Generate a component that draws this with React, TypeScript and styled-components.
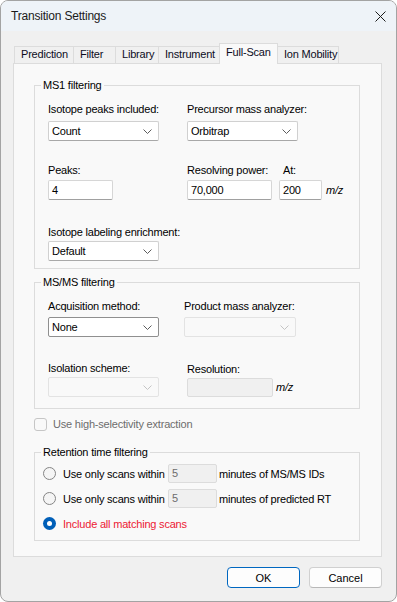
import React from 'react'
import styled, { createGlobalStyle, css } from 'styled-components'

const GlobalStyle = createGlobalStyle`
  html, body {
    margin: 0;
    padding: 0;
    background: #ffffff;
  }

  body {
    font-family: "Segoe UI", "Liberation Sans", Arial, sans-serif;
    font-size: 11px;
    letter-spacing: -0.2px;
    color: #000000;
  }

  * {
    box-sizing: border-box;
  }
`

const tabs = [
  { label: 'Prediction', width: 60 },
  { label: 'Filter', width: 43 },
  { label: 'Library', width: 44 },
  { label: 'Instrument', width: 62 },
  { label: 'Full-Scan', width: 59, active: true },
  { label: 'Ion Mobility', width: 62 },
]

function Chevron ({ disabled }: { disabled?: boolean }) {
  return (
    <svg width='9' height='5' viewBox='0 0 9 5'>
      <path d='M0.5 0.5 L4.5 4.5 L8.5 0.5' fill='none' stroke={disabled ? '#c4c4c4' : '#5c5c5c'} strokeWidth='1' />
    </svg>
  )
}

function ComboBox ({ value, width, disabled, strong }: { value?: string, width: number, disabled?: boolean, strong?: boolean }) {
  return (
    <Combo $w={width} $disabled={disabled} $strong={strong}>
      <span>{ value }</span>
      <Chevron disabled={disabled} />
    </Combo>
  )
}

export default function App () {
  return (
    <>
      <GlobalStyle />
      <Window>
        <TitleBar>
          <Title>Transition Settings</Title>
          <svg width='11' height='11' viewBox='0 0 11 11'>
            <path d='M0.5 0.5 L10.5 10.5 M10.5 0.5 L0.5 10.5' stroke='#1b1b1b' strokeWidth='1' />
          </svg>
        </TitleBar>
        <Body>
          <TabStrip>
            { tabs.map(tab => (
              <Tab key={tab.label} $w={tab.width} $active={tab.active}>{ tab.label }</Tab>
            )) }
          </TabStrip>
          <TabPanel>
            <GroupBox>
              <Legend>MS1 filtering</Legend>
              <GroupBody $pad='10px 13px 7px 13px'>
                <FieldRow $col={139}>
                  <Field>
                    <Label $gap={5}>Isotope peaks included:</Label>
                    <ComboBox value='Count' width={111} />
                  </Field>
                  <Field>
                    <Label $gap={5}>Precursor mass analyzer:</Label>
                    <ComboBox value='Orbitrap' width={111} />
                  </Field>
                </FieldRow>
                <FieldRow $col={139} $top={22}>
                  <Field>
                    <Label $gap={3}>Peaks:</Label>
                    <TextBox $w={65}>4</TextBox>
                  </Field>
                  <Inline>
                    <Field>
                      <Label $gap={3}>Resolving power:</Label>
                      <TextBox $w={85}>70,000</TextBox>
                    </Field>
                    <Field>
                      <Label $gap={3} $indent={4}>At:</Label>
                      <TextBox $w={43}>200</TextBox>
                    </Field>
                    <Unit>m/z</Unit>
                  </Inline>
                </FieldRow>
                <FieldRow $col={139} $top={25}>
                  <Field>
                    <Label $gap={2}>Isotope labeling enrichment:</Label>
                    <ComboBox value='Default' width={111} />
                  </Field>
                </FieldRow>
              </GroupBody>
            </GroupBox>

            <GroupBox $top={6}>
              <Legend>MS/MS filtering</Legend>
              <GroupBody $pad='10px 13px 11px 13px'>
                <FieldRow $col={136}>
                  <Field>
                    <Label $gap={4}>Acquisition method:</Label>
                    <ComboBox value='None' width={111} strong />
                  </Field>
                  <Field>
                    <Label $gap={4}>Product mass analyzer:</Label>
                    <ComboBox width={112} disabled />
                  </Field>
                </FieldRow>
                <FieldRow $col={136} $top={24}>
                  <Field>
                    <Label $gap={2}>Isolation scheme:</Label>
                    <ComboBox width={111} disabled />
                  </Field>
                  <Inline $indent={3}>
                    <Field>
                      <Label $gap={2}>Resolution:</Label>
                      <TextBox $w={86} $disabled />
                    </Field>
                    <Unit $gap={3}>m/z</Unit>
                  </Inline>
                </FieldRow>
              </GroupBody>
            </GroupBox>

            <CheckRow>
              <CheckBox />
              <DisabledText>Use high-selectivity extraction</DisabledText>
            </CheckRow>

            <GroupBox $top={14}>
              <Legend>Retention time filtering</Legend>
              <GroupBody $pad='5px 8px 7px 8px'>
                <RadioRow>
                  <Radio />
                  <RadioText $w={105}>Use only scans within</RadioText>
                  <TextBox $w={49} $disabled>5</TextBox>
                  <After>minutes of MS/MS IDs</After>
                </RadioRow>
                <RadioRow $top={6}>
                  <Radio />
                  <RadioText $w={105}>Use only scans within</RadioText>
                  <TextBox $w={49} $disabled>5</TextBox>
                  <After>minutes of predicted RT</After>
                </RadioRow>
                <RadioRow $top={6}>
                  <Radio $checked />
                  <RadioText $red>Include all matching scans</RadioText>
                </RadioRow>
              </GroupBody>
            </GroupBox>
          </TabPanel>
          <ButtonRow>
            <Button $primary>OK</Button>
            <Button>Cancel</Button>
          </ButtonRow>
        </Body>
      </Window>
    </>
  )
}

const Window = styled.div`
  width: 397px;
  height: 602px;
  border: 1px solid #a3a3a3;
  border-radius: 8px;
  overflow: hidden;
  background: #f0f0f0;
  display: flex;
  flex-direction: column;
`

const TitleBar = styled.header`
  height: 30px;
  flex: none;
  background: #eef3f8;
  display: flex;
  align-items: center;
  justify-content: space-between;
  padding: 0 10px 0 10px;
`

const Title = styled.div`
  font-size: 12px;
  color: #1a1a1a;
`

const Body = styled.div`
  flex: 1;
  display: flex;
  flex-direction: column;
  padding: 12px 14px 13px 12px;
`

const TabStrip = styled.div`
  display: flex;
  align-items: flex-end;
  height: 21px;
  margin-bottom: -1px;
  padding-left: 1px;
  position: relative;
  z-index: 1;
`

const Tab = styled.div<{ $w: number, $active?: boolean }>`
  width: ${p => p.$w}px;
  height: 17px;
  margin-bottom: 1px;
  border: 1px solid #dcdcdc;
  border-bottom: none;
  background: #f0f0f0;
  padding-left: 6px;
  line-height: 15px;
  white-space: nowrap;
  color: #0c0c1c;

  &:not(:first-child) {
    margin-left: -1px;
  }

  ${p => p.$active && css`
    height: 21px;
    margin-bottom: 0;
    background: #f9f9f9;
    line-height: 16px;
    position: relative;
    z-index: 1;
  `}
`

const TabPanel = styled.div`
  flex: 1;
  background: #f9f9f9;
  border: 1px solid #dcdcdc;
  padding: 14px 21px 0 20px;
`

const GroupBox = styled.fieldset<{ $top?: number }>`
  margin: ${p => p.$top ?? 0}px 0 0 0;
  padding: 0;
  border: 1px solid #dcdcdc;
  min-width: 0;
`

const Legend = styled.legend`
  margin-left: 6px;
  padding: 0 2px;
  line-height: 14px;
`

const GroupBody = styled.div<{ $pad: string }>`
  padding: ${p => p.$pad};
`

const FieldRow = styled.div<{ $col: number, $top?: number }>`
  display: grid;
  grid-template-columns: ${p => p.$col}px 1fr;
  margin-top: ${p => p.$top ?? 0}px;
`

const Field = styled.div`
  display: flex;
  flex-direction: column;
  align-items: flex-start;
`

const Label = styled.label<{ $gap: number, $indent?: number }>`
  line-height: 14px;
  margin-bottom: ${p => p.$gap}px;
  margin-left: ${p => p.$indent ?? 0}px;
  white-space: nowrap;
`

const Inline = styled.div<{ $indent?: number }>`
  display: flex;
  align-items: flex-end;
  gap: 7px;
  margin-left: ${p => p.$indent ?? 0}px;
`

const Unit = styled.span<{ $gap?: number }>`
  font-style: italic;
  line-height: 20px;
  margin-left: ${p => (p.$gap ?? 4) - 7}px;
`

const Combo = styled.div<{ $w: number, $disabled?: boolean, $strong?: boolean }>`
  width: ${p => p.$w}px;
  height: 20px;
  display: flex;
  align-items: center;
  justify-content: space-between;
  padding: 0 6px 0 3px;
  background: #ffffff;
  border: 1px solid #d0d0d0;
  border-bottom-color: #a8a8a8;
  border-radius: 2px;

  ${p => p.$strong && css`
    border-color: #8f8f8f;
  `}

  ${p => p.$disabled && css`
    background: #f9f9f9;
    border-color: #e3e3e3;
  `}
`

const TextBox = styled.div<{ $w: number, $disabled?: boolean }>`
  width: ${p => p.$w}px;
  height: 20px;
  line-height: 18px;
  padding: 0 3px;
  background: #ffffff;
  border: 1px solid #d6d6d6;
  border-bottom-color: #a0a0a0;
  border-radius: 2px;
  flex: none;

  ${p => p.$disabled && css`
    height: 19px;
    line-height: 17px;
    background: #f0f0f0;
    border-color: #dcdcdc;
    color: #6d6d6d;
  `}
`

const CheckRow = styled.div`
  display: flex;
  align-items: center;
  gap: 6px;
  height: 14px;
  margin-top: 8px;
`

const CheckBox = styled.span`
  width: 13px;
  height: 13px;
  border: 1px solid #c6c6c6;
  border-radius: 3px;
  background: #f9f9f9;
`

const DisabledText = styled.span`
  color: #6d6d6d;
`

const RadioRow = styled.div<{ $top?: number }>`
  display: flex;
  align-items: center;
  height: 19px;
  margin-top: ${p => p.$top ?? 0}px;
`

const Radio = styled.span<{ $checked?: boolean }>`
  width: 13px;
  height: 13px;
  border-radius: 50%;
  flex: none;
  margin-right: 7px;

  ${p => p.$checked
    ? css`
      background: #005fb8;
      display: flex;
      align-items: center;
      justify-content: center;

      &::after {
        content: '';
        width: 5px;
        height: 5px;
        border-radius: 50%;
        background: #ffffff;
      }
    `
    : css`
      border: 1px solid #858585;
      background: #f5f5f5;
    `}
`

const RadioText = styled.span<{ $w?: number, $red?: boolean }>`
  width: ${p => p.$w ? `${p.$w}px` : 'auto'};
  white-space: nowrap;
  color: ${p => p.$red ? '#ec1a34' : '#000000'};
`

const After = styled.span`
  margin-left: 2px;
  white-space: nowrap;
`

const ButtonRow = styled.div`
  display: flex;
  justify-content: flex-end;
  gap: 9px;
  margin-top: 10px;
`

const Button = styled.button<{ $primary?: boolean }>`
  width: 73px;
  height: 21px;
  padding: 0;
  font: inherit;
  color: #000000;
  background: #fdfdfd;
  border: 1px solid #d0d0d0;
  border-bottom-color: #b8b8b8;
  border-radius: 4px;

  ${p => p.$primary && css`
    border: 1px solid #0067c0;
  `}
`
